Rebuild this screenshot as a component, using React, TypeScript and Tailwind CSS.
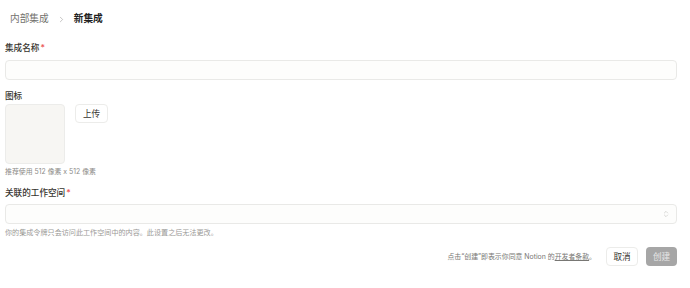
import { ChevronRight, ChevronsUpDown } from 'lucide-react';
import React from 'react';

const App: React.FC = () => {
  return (
    <div className="w-[690px] h-[288px] bg-white pl-[5px] pr-[13px] font-['Inter','Noto_Sans_CJK_SC',sans-serif] text-[#37352f]">
      {/* Breadcrumb */}
      <div className="pt-[12px] pl-[5px] flex items-center h-[26px] text-[9.7px] leading-[14px]">
        <span className="text-[#73726e]">内部集成</span>
        <ChevronRight className="w-[9px] h-[9px] mx-[8px] text-[#9b9a97]" strokeWidth={1.5} />
        <span className="font-bold text-[#1f1f1f]">新集成</span>
      </div>

      {/* Name */}
      <div className="mt-[16px] h-[12px] text-[8.6px] leading-[12px] font-medium">
        集成名称<span className="ml-[1px] text-[#eb5757]">*</span>
      </div>
      <div className="mt-[6px] h-[20px] rounded-[4px] border border-[#e9e9e7] bg-[#fdfdfc]" />

      {/* Icon */}
      <div className="mt-[10px] h-[12px] text-[8.6px] leading-[12px] font-medium">图标</div>
      <div className="mt-[2px] flex gap-[10px]">
        <div className="w-[60px] h-[60px] rounded-[4px] border border-[#ececea] bg-[#f7f6f3]" />
        <button className="h-[19px] px-[7px] rounded-[4px] border border-[#ececea] bg-white text-[8.6px] leading-[12px] text-[#37352f]">
          上传
        </button>
      </div>
      <div className="mt-[3px] h-[10px] text-[6.9px] leading-[10px] text-[#8c8b87]">
        推荐使用 512 像素 x 512 像素
      </div>

      {/* Workspace */}
      <div className="mt-[10px] h-[12px] text-[8.6px] leading-[12px] font-medium">
        关联的工作空间<span className="ml-[1px] text-[#eb5757]">*</span>
      </div>
      <div className="mt-[5px] h-[20px] rounded-[4px] border border-[#e9e9e7] bg-[#fdfdfc] flex items-center justify-end pr-[6px]">
        <ChevronsUpDown className="w-[8px] h-[8px] text-[#b5b4b0]" strokeWidth={1.5} />
      </div>
      <div className="mt-[4px] h-[10px] text-[7.1px] leading-[10px] text-[#9b9a97]">
        你的集成令牌只会访问此工作空间中的内容。此设置之后无法更改。
      </div>

      {/* Footer */}
      <div className="mt-[9px] flex items-center justify-end">
        <span className="text-[6.9px] leading-[10px] text-[#787774]">
          点击“创建”即表示你同意 Notion 的<span className="underline">开发者条款</span>。
        </span>
        <button className="ml-[10px] h-[19px] w-[32px] rounded-[4px] border border-[#ececea] bg-white text-[8.6px] leading-[12px] text-[#37352f]">
          取消
        </button>
        <button className="ml-[8px] h-[19px] w-[31px] rounded-[4px] bg-[#a6a6a6] text-[8.6px] leading-[12px] text-[#e6e6e6]">
          创建
        </button>
      </div>
    </div>
  );
};

export default App;
